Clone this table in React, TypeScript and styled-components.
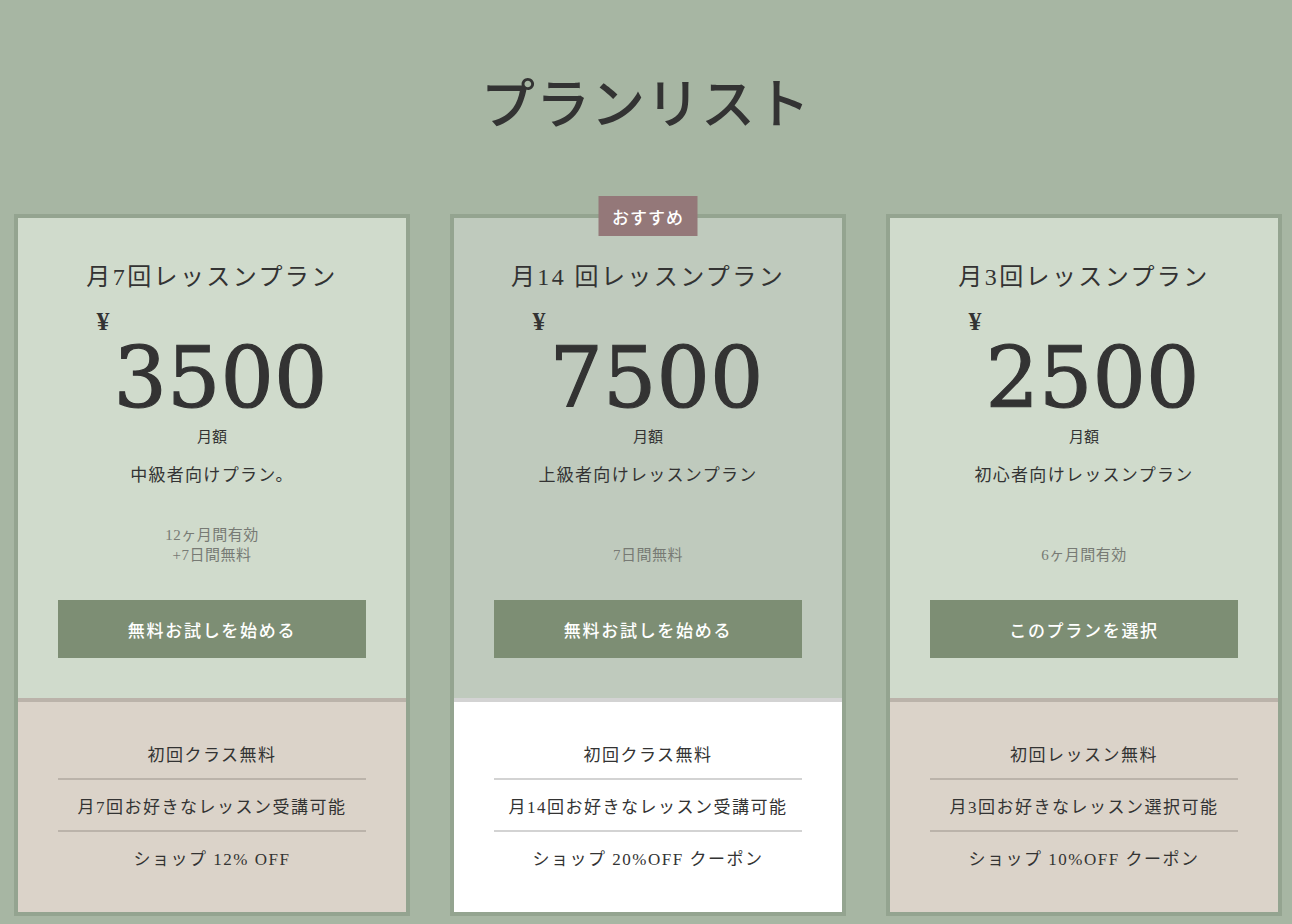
import React from 'react';
import styled, {createGlobalStyle} from 'styled-components';

const GlobalStyle = createGlobalStyle`
body {
  margin: 0;
  background-color: #a7b6a3;
  font-family: "Liberation Serif", "Noto Sans CJK JP", serif;
  color: #333333;
}
`
const Page = styled.div`
  min-height: 924px;
  padding-top: 60px;
  box-sizing: border-box;
`
const PageTitle = styled.h1`
  margin: 0;
  text-align: center;
  font-family: "Noto Sans CJK JP", sans-serif;
  font-weight: 500;
  font-size: 54px;
  line-height: 81px;
  letter-spacing: 1px;
  color: #333333;
`
const CardRow = styled.div`
  display: flex;
  gap: 40px;
  padding: 0 10px 0 14px;
  margin-top: 73px;
`
const Card = styled.div`
  position: relative;
  width: 396px;
  border: 4px solid #94a490;
  box-sizing: border-box;
  display: flex;
  flex-direction: column;
`
const Badge = styled.div`
  position: absolute;
  top: -22px;
  left: 50%;
  transform: translateX(-50%);
  width: 99px;
  height: 40px;
  display: flex;
  align-items: center;
  justify-content: center;
  background-color: #947879;
  color: #ffffff;
  font-size: 17px;
  font-weight: 500;
  letter-spacing: 1px;
`
const TopSection = styled.div<{featured?: boolean}>`
  background-color: ${p => (p.featured ? '#bfcabd' : '#d0dbcc')};
  padding: 42px 40px 40px;
  display: flex;
  flex-direction: column;
  align-items: center;
`
const PlanName = styled.h2`
  margin: 0;
  font-weight: normal;
  font-size: 24px;
  line-height: 34px;
  letter-spacing: 2.4px;
`
const PriceRow = styled.div`
  display: flex;
  align-items: flex-start;
  margin-top: 15px;
`
const Yen = styled.span`
  font-size: 26px;
  line-height: 26px;
  font-weight: bold;
  margin-right: 4px;
`
const Amount = styled.span`
  font-family: "DejaVu Serif", serif;
  font-size: 84px;
  line-height: 80px;
  margin-top: 29px;
  -webkit-text-stroke: 1.2px #333333;
`
const Period = styled.div`
  margin-top: 7px;
  font-size: 15px;
  line-height: 24px;
`
const Description = styled.p`
  margin: 13px 0 0;
  font-size: 17px;
  line-height: 28px;
  letter-spacing: 1.3px;
`
const NoteBox = styled.div`
  height: 75px;
  display: flex;
  flex-direction: column;
  justify-content: flex-end;
  align-items: center;
  font-size: 15px;
  line-height: 20px;
  color: #777a74;
  letter-spacing: 0.5px;
`
const Button = styled.button`
  margin-top: 35px;
  width: 100%;
  height: 58px;
  border: none;
  background-color: #7d8e74;
  color: #ffffff;
  font-family: inherit;
  font-size: 17px;
  font-weight: 500;
  letter-spacing: 1.7px;
  cursor: pointer;
`
const FeatureList = styled.ul<{featured?: boolean}>`
  flex: 1;
  margin: 0;
  list-style: none;
  padding: 26px 40px 30px;
  border-top: 4px solid ${p => (p.featured ? '#d3d3d3' : '#bbb3aa')};
  background-color: ${p => (p.featured ? '#ffffff' : '#dbd3c9')};
`
const FeatureItem = styled.li<{featured?: boolean}>`
  height: 50px;
  display: flex;
  align-items: center;
  justify-content: center;
  font-size: 17px;
  letter-spacing: 1.5px;
  &:not(:last-child) {
    border-bottom: 2px solid ${p => (p.featured ? '#d3d3d3' : '#bbb3aa')};
  }
`

type Plan = {
  name: string
  price: string
  description: string
  notes: string[]
  button: string
  features: string[]
  featured?: boolean
}

const plans: Plan[] = [
  {
    name: '月7回レッスンプラン',
    price: '3500',
    description: '中級者向けプラン。',
    notes: ['12ヶ月間有効', '+7日間無料'],
    button: '無料お試しを始める',
    features: ['初回クラス無料', '月7回お好きなレッスン受講可能', 'ショップ 12% OFF'],
  },
  {
    name: '月14 回レッスンプラン',
    price: '7500',
    description: '上級者向けレッスンプラン',
    notes: ['7日間無料'],
    button: '無料お試しを始める',
    features: ['初回クラス無料', '月14回お好きなレッスン受講可能', 'ショップ 20%OFF クーポン'],
    featured: true,
  },
  {
    name: '月3回レッスンプラン',
    price: '2500',
    description: '初心者向けレッスンプラン',
    notes: ['6ヶ月間有効'],
    button: 'このプランを選択',
    features: ['初回レッスン無料', '月3回お好きなレッスン選択可能', 'ショップ 10%OFF クーポン'],
  },
]

export default function App() {
  return (
    <Page>
      <GlobalStyle />
      <PageTitle>プランリスト</PageTitle>
      <CardRow>
        {plans.map((plan, index) => (
          <Card key={index}>
            {plan.featured && <Badge>おすすめ</Badge>}
            <TopSection featured={plan.featured}>
              <PlanName>{plan.name}</PlanName>
              <PriceRow>
                <Yen>¥</Yen>
                <Amount>{plan.price}</Amount>
              </PriceRow>
              <Period>月額</Period>
              <Description>{plan.description}</Description>
              <NoteBox>
                {plan.notes.map(note => (
                  <div key={note}>{note}</div>
                ))}
              </NoteBox>
              <Button>{plan.button}</Button>
            </TopSection>
            <FeatureList featured={plan.featured}>
              {plan.features.map(feature => (
                <FeatureItem key={feature} featured={plan.featured}>{feature}</FeatureItem>
              ))}
            </FeatureList>
          </Card>
        ))}
      </CardRow>
    </Page>
  )
}
